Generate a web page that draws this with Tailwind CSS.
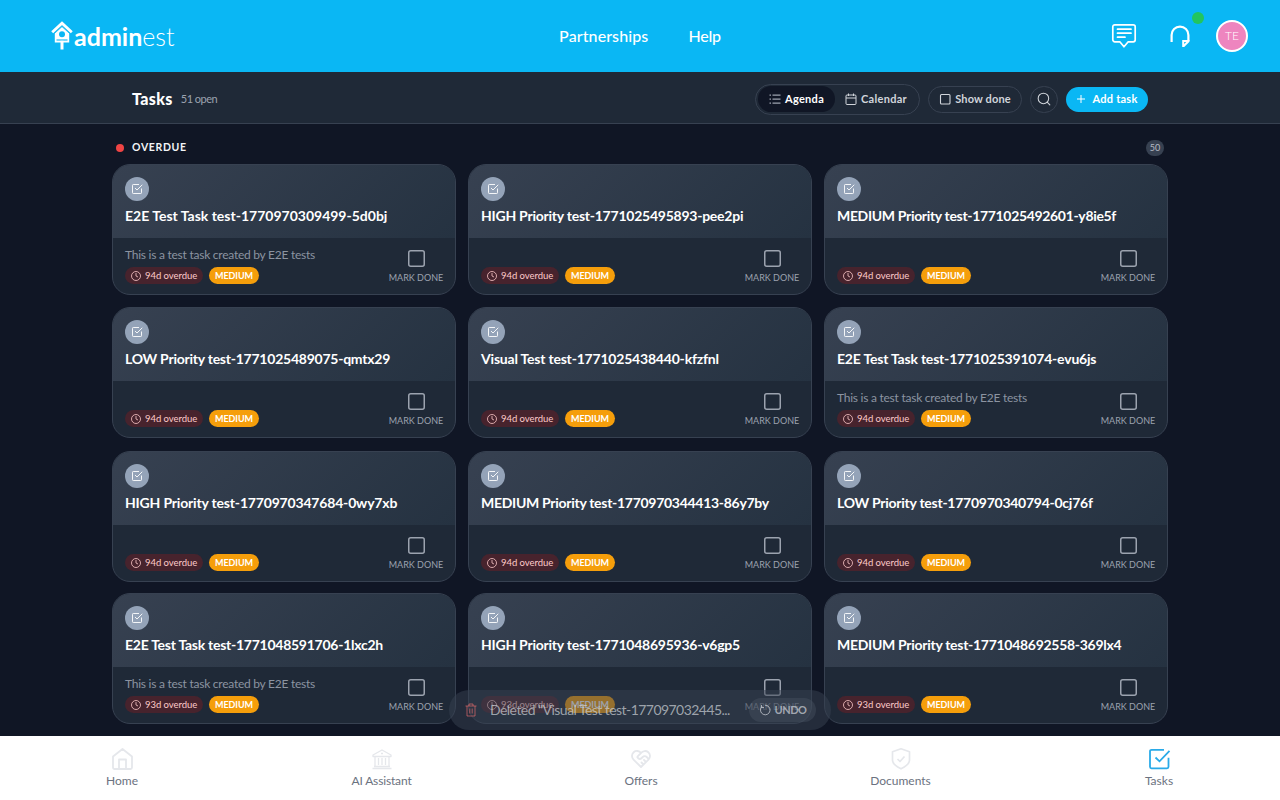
<!DOCTYPE html>
<html lang="en">
<head>
    <meta charset="UTF-8">
    <meta name="viewport" content="width=device-width, initial-scale=1.0">
    <title>Adminest - Tasks</title>
    <script src="https://cdn.jsdelivr.net/npm/@tailwindcss/browser@4"></script>
</head>
<body class="h-screen overflow-hidden flex flex-col bg-[#101625] font-['Lato',sans-serif]">
    <!-- Top bar -->
    <header class="h-[72px] shrink-0 bg-[#0ab7f4] text-white grid grid-cols-3 items-center px-8">
        <div class="flex items-center ml-[19px]">
            <svg class="w-[22px] h-[30px]" viewBox="0 0 22 30" fill="none" stroke="currentColor">
                <path d="M1.2 11.2 11 2.2l9.8 9" stroke-width="2.8"/>
                <path d="M11 5.6 18.2 12v9.6H3.8V12z" fill="currentColor" stroke="none"/>
                <path d="M3.400 12.500 11 5.600l7.600 6.900" stroke="#0ab7f4" stroke-width=".8"/>
                <circle cx="11" cy="13.2" r="3" fill="#0ab7f4" stroke="none"/>
                <path d="M5.5 19h11" stroke="#0ab7f4" stroke-width="1.1"/>
                <path d="M11 19.8v8.700" stroke-width="3"/>
            </svg>
            <span class="text-[25px] leading-[30px] font-bold ml-px">admin<span class="font-light">est</span></span>
        </div>
        <nav class="flex justify-center gap-10 text-base font-medium">
            <a class="tracking-[0.1px]">Partnerships</a>
            <a class="tracking-[-0.2px]">Help</a>
        </nav>
        <div class="flex justify-end items-center">
            <svg class="w-7 h-7 mr-7" viewBox="0 0 28 28" fill="none" stroke="currentColor" stroke-width="1.7" stroke-linecap="round" stroke-linejoin="round">
                <path d="M4.8 2.8h18.400a2 2 0 0 1 2 2v13a2 2 0 0 1-2 2h-5L14 24.8l-4.2-5h-5a2 2 0 0 1-2-2v-13a2 2 0 0 1 2-2zM7.500 7.2h13.500M7.500 11.200h13.500M7.500 15.200h7.500"/>
            </svg>
            <div class="relative mr-[22px]">
                <svg class="w-7 h-7" viewBox="0 0 28 28" fill="none" stroke="currentColor" stroke-width="2.2">
                    <path d="M5.6 20v-7a8.4 8.4 0 0 1 16.8 0v6"/>
                    <path d="M16.200 18h7.300v1.800l-5.300 5.200h-2zM18.200 20v2l2-2z" fill="currentColor" fill-rule="evenodd" stroke="none"/>
                </svg>
                <span class="absolute -top-2.5 right-[-10px] w-3 h-3 rounded-full bg-[#22c55e]"></span>
            </div>
            <div class="w-8 h-8 rounded-full border-2 border-white bg-[#ee85bf] flex items-center justify-center text-xs font-light">TE</div>
        </div>
    </header>

    <!-- Tasks toolbar -->
    <div class="h-[52px] shrink-0 bg-[#1f2937] border-b border-[#374151]">
        <div class="w-[1056px] h-full mx-auto px-5 pt-[3px] flex items-center text-[11px] font-medium text-[#d1d5db]">
            <h1 class="text-base font-black text-white tracking-[0.35px]">Tasks</h1>
            <span class="ml-2 text-[#9ca3af] font-normal tracking-[-0.5px]">51 open</span>
            <div class="ml-auto h-[31px] w-[165px] rounded-full border border-[#374151] flex items-center p-0.5">
                <button class="h-[26px] w-[77px] rounded-full bg-[#101625] text-white font-bold flex items-center justify-center gap-1 tracking-[0.3px]">
                    <svg class="w-3 h-3" viewBox="0 0 24 24" fill="none" stroke="#9ca3af" stroke-width="2.5"><path d="M7 4h16M7 12h16M7 20h16M1 4h3M1 12h3M1 20h3"/></svg>
                    Agenda
                </button>
                <button class="flex-1 flex items-center justify-center gap-1 font-bold tracking-[0.3px]">
                    <svg class="w-3 h-3" viewBox="0 0 24 24" fill="none" stroke="currentColor" stroke-width="2"><rect x="2" y="4" width="20" height="19" rx="2"/><path d="M2 10h20M7 1v5M17 1v5"/></svg>
                    Calendar
                </button>
            </div>
            <button class="ml-2 h-[27px] w-[94px] rounded-full border border-[#374151] flex items-center justify-center gap-1 font-bold tracking-[0.15px]">
                <svg class="w-3 h-3" viewBox="0 0 24 24" fill="none" stroke="currentColor" stroke-width="2.2"><rect x="3" y="3" width="19" height="19" rx="2"/></svg>
                Show done
            </button>
            <button class="ml-2 w-7 h-[27px] rounded-full border border-[#374151] flex items-center justify-center">
                <svg class="w-3.5 h-3.5" viewBox="0 0 24 24" fill="none" stroke="currentColor" stroke-width="1.8" stroke-linecap="round"><circle cx="11" cy="11" r="9"/><path d="m17.5 17.5 4.5 4.5"/></svg>
            </button>
            <button class="ml-2 h-[25px] w-[82px] rounded-full bg-[#0ab7f4] text-white font-bold flex items-center justify-center gap-1.5 tracking-[0.25px]">
                <svg class="w-2.5 h-2.5" viewBox="0 0 10 10" fill="none" stroke="currentColor"><path d="M5 1v8M1 5h8"/></svg>
                Add task
            </button>
        </div>
    </div>

    <!-- Task list -->
    <main class="flex-1 min-h-0 overflow-hidden">
        <div class="w-[1056px] mx-auto">
            <div class="h-10 flex items-center pt-2 px-1">
                <span class="w-2 h-2 rounded-full bg-[#ef4444]"></span>
                <h2 class="ml-2 pb-px text-[10.5px] font-bold tracking-[0.65px] text-[#f3f4f6]">OVERDUE</h2>
                <span class="ml-auto w-[18px] h-4 rounded-full bg-[#374151] text-[#b6bbc4] text-[9px] flex items-center justify-center">50</span>
            </div>
            <div id="task-grid" class="grid grid-cols-3 grid-rows-[131px_132px_130px_131px] gap-3"></div>
        </div>
    </main>

    <!-- Undo toast -->
    <div class="absolute left-[449px] top-[690px] w-[382px] h-10 rounded-full bg-[#374151]/50 flex items-center pl-4 pr-[15px] text-[#d1d5db]/70">
        <svg class="w-3 h-3.5 text-[#f87171]/60" viewBox="0 0 12 14" fill="none" stroke="currentColor"><path d="M.5 3h11M2 3v10h8V3M4 3V1h4v2M4.8 5.500v5M7.2 5.500v5"/></svg>
        <span class="ml-[13px] text-sm leading-5 whitespace-nowrap tracking-[-0.55px]">Deleted "Visual Test test-177097032445...</span>
        <button class="ml-auto h-6 w-[67px] shrink-0 rounded-full bg-[#4b5563]/40 flex items-center justify-center gap-1 text-[11px] font-bold tracking-[-0.5px]">
            <svg class="w-3 h-3" viewBox="0 0 12 12" fill="none" stroke="currentColor"><path d="M2.500 3A4.800 4.800 0 1 0 6 1.200M2.500 1v2.500H5"/></svg>
            UNDO
        </button>
    </div>

    <!-- Bottom navigation -->
    <nav class="h-16 shrink-0 bg-white grid grid-cols-[244px_275px_244px_275px_242px] text-xs leading-4 text-[#6b7280]">
        <a class="flex flex-col items-center pt-[11px] gap-0.5">
            <svg class="w-6 h-6 text-[#e5e7eb]" viewBox="0 0 24 24" fill="none" stroke="currentColor" stroke-width="1.8" stroke-linejoin="round"><path d="M3 9.500 12.500 2 22 9.500V20.500a1.500 1.500 0 0 1-1.500 1.500h-16A1.500 1.500 0 0 1 3 20.500zM9 22v-9.500h7V22"/></svg>
            Home
        </a>
        <a class="flex flex-col items-center pt-[11px] gap-0.5">
            <svg class="w-6 h-6 text-[#e5e7eb]" viewBox="0 0 24 24" fill="none" stroke="currentColor" stroke-width="1.3" stroke-linejoin="round"><path d="m3 8 9-5 9 5v1.500H3zM4 19.500h16M2.500 21.500h19M5 9.500v10M8.500 11v7M12 11v7M15.500 11v7M19 9.500v10M11 6.500h2"/></svg>
            <span class="tracking-[-0.15px]">AI Assistant</span>
        </a>
        <a class="flex flex-col items-center pt-[11px] gap-0.5">
            <svg class="w-6 h-6 text-[#e5e7eb]" viewBox="0 0 24 24" fill="none" stroke="currentColor" stroke-width="1.8" stroke-linecap="round" stroke-linejoin="round"><path d="M19.500 12.570 12 20l-7.500-7.430A5 5 0 1 1 12 6.010a5 5 0 1 1 7.500 6.570M12 6 8.700 9.300a1 1 0 0 0 0 1.400l.55.55a2.300 2.300 0 0 0 3.200 0l1-1a3.200 3.200 0 0 1 4.500 0l1.600 1.600M12.500 15.500l2 2M15 13l2 2"/></svg>
            Offers
        </a>
        <a class="flex flex-col items-center pt-[11px] gap-0.5">
            <svg class="w-6 h-6 text-[#e5e7eb]" viewBox="0 0 24 24" fill="none" stroke="currentColor" stroke-width="1.7" stroke-linejoin="round"><path d="m12 1.800 8.500 3v8.500c0 4-5.500 7-8.500 8.500-3-1.500-8.500-4.500-8.500-8.500V4.800zM8.500 12l2.500 2.500 4.500-5"/></svg>
            Documents
        </a>
        <a class="flex flex-col items-center pt-[11px] gap-0.5">
            <svg class="w-6 h-6 text-[#29aae8]" viewBox="0 0 24 24" fill="none" stroke="currentColor" stroke-width="1.8"><path d="M17 2.800H4.500A1.500 1.500 0 0 0 3 4.300v15.500a1.500 1.500 0 0 0 1.500 1.500h15.500a1.500 1.500 0 0 0 1.500-1.500v-9M8.500 10.500l4 3.800L22.500 3.800"/></svg>
            Tasks
        </a>
    </nav>

    <script>
        const NOTE = 'This is a test task created by E2E tests';

        const tasks = [
            { title: 'E2E Test Task test-1770970309499-5d0bj', note: NOTE, days: 94, tracking: 'tracking-normal' },
            { title: 'HIGH Priority test-1771025495893-pee2pi', days: 94, tracking: 'tracking-[-0.24px]' },
            { title: 'MEDIUM Priority test-1771025492601-y8ie5f', days: 94, tracking: 'tracking-[-0.33px]' },
            { title: 'LOW Priority test-1771025489075-qmtx29', days: 94, tracking: 'tracking-[-0.24px]' },
            { title: 'Visual Test test-1771025438440-kfzfnl', days: 94, tracking: 'tracking-[-0.2px]' },
            { title: 'E2E Test Task test-1771025391074-evu6js', note: NOTE, days: 94, tracking: 'tracking-[-0.2px]' },
            { title: 'HIGH Priority test-1770970347684-0wy7xb', days: 94, tracking: 'tracking-[-0.18px]' },
            { title: 'MEDIUM Priority test-1770970344413-86y7by', days: 94, tracking: 'tracking-[-0.29px]' },
            { title: 'LOW Priority test-1770970340794-0cj76f', days: 94, tracking: 'tracking-[-0.26px]' },
            { title: 'E2E Test Task test-1771048591706-1lxc2h', note: NOTE, days: 93, tracking: 'tracking-[-0.26px]' },
            { title: 'HIGH Priority test-1771048695936-v6gp5', days: 93, tracking: 'tracking-[-0.24px]' },
            { title: 'MEDIUM Priority test-1771048692558-369lx4', days: 93, tracking: 'tracking-[-0.29px]' }
        ];

        document.getElementById('task-grid').innerHTML = tasks.map(task => `
            <article class="h-[131px] rounded-[18px] border border-[#374151] bg-[#1f2937] overflow-hidden flex flex-col">
                <div class="h-[73px] shrink-0 px-3 pt-3 bg-linear-135 from-[#374151] to-[#253241]">
                    <div class="w-6 h-6 rounded-full bg-[#94a3b8] text-white flex items-center justify-center">
                        <svg class="w-3 h-3" viewBox="0 0 24 24" fill="none" stroke="currentColor" stroke-width="1.8"><path d="M16 3H4.500A1.500 1.500 0 0 0 3 4.500v15A1.500 1.500 0 0 0 4.500 21h15a1.500 1.500 0 0 0 1.500-1.500V11M8 10l4 4L22.500 3.500"/></svg>
                    </div>
                    <h3 class="mt-[5px] text-sm leading-5 font-bold text-white whitespace-nowrap ${task.tracking}">${task.title}</h3>
                </div>
                <div class="flex-1 flex justify-between px-3">
                    <div class="flex flex-col justify-end pb-2.5">
                        <p class="text-xs leading-4 tracking-[-0.25px] text-[#8c94a1] mb-1">${task.note || ''}</p>
                        <div class="flex gap-1.5 text-[9.5px] leading-[17px]">
                            <span class="h-[17px] w-[78px] rounded-full bg-[#47232d] text-[#fecaca] flex items-center pl-1.5 gap-1 tracking-[-0.05px]">
                                <svg class="w-2.5 h-2.5" viewBox="0 0 10 10" fill="none" stroke="currentColor" stroke-width=".8"><circle cx="5" cy="5" r="4.500"/><path d="M5 2v3l2 1"/></svg>
                                ${task.days}d overdue
                            </span>
                            <span class="h-[17px] w-[50px] rounded-full bg-[#f59e0b] text-white font-bold text-[9px] tracking-[-0.1px] flex items-center justify-center">MEDIUM</span>
                        </div>
                    </div>
                    <div class="w-[54px] flex flex-col items-center pt-3">
                        <svg class="w-[17px] h-[17px] text-[#9ca3af]" viewBox="0 0 17 17" fill="none" stroke="currentColor" stroke-width="1.5"><rect x=".75" y=".75" width="15.500" height="15.500" rx="2"/></svg>
                        <span class="mt-[5px] text-[9px] leading-3 text-[#9ca3af] whitespace-nowrap">MARK DONE</span>
                    </div>
                </div>
            </article>
        `).join('');
    </script>
</body>
</html>
